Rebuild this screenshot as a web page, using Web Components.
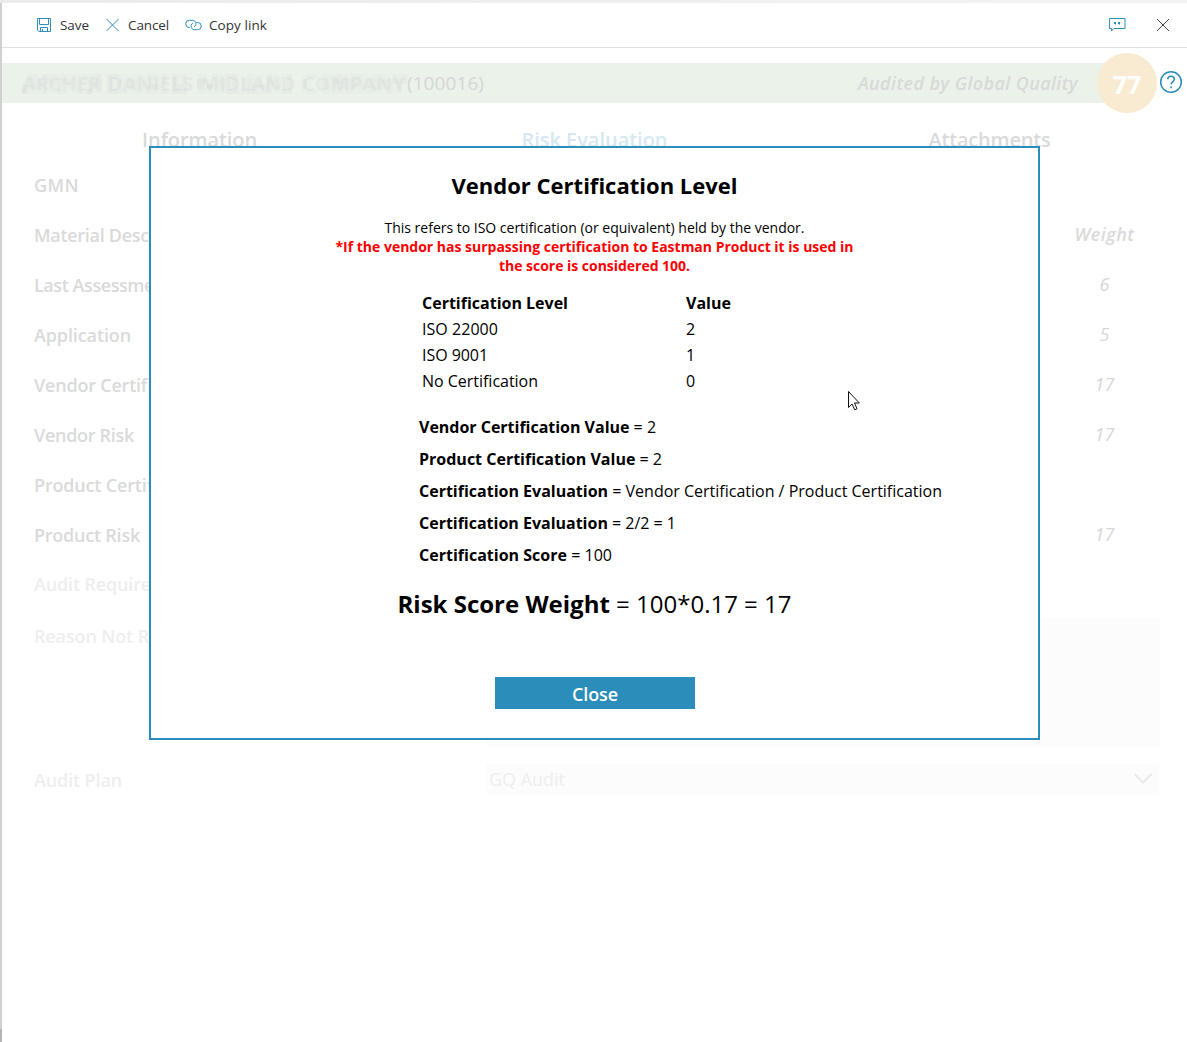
<!DOCTYPE html>
<html lang="en">
<head>
<meta charset="utf-8">
<title>Vendor Certification Level</title>
<style>
html, body { margin: 0; height: 100%; }
body { font-family: "Open Sans", "Noto Sans", sans-serif; background: #fff; overflow: hidden; }
</style>
</head>
<body>
<risk-app></risk-app>
<script>
const define = (name, html, after) => {
  const tpl = document.createElement('template');
  tpl.innerHTML = html;
  customElements.define(name, class extends HTMLElement {
    connectedCallback() {
      if (this.shadowRoot) return;
      this.attachShadow({ mode: 'open' }).appendChild(tpl.content.cloneNode(true));
      if (after) after(this);
    }
  });
};

/* A single line of text tracked to a given measure (attribute w). */
define('fit-text', `<style>:host{display:inline-block;white-space:pre;flex:none}</style><slot></slot>`, el => {
  const w = parseFloat(el.getAttribute('w'));
  if (!w) return;
  const n = el.textContent.length;
  const cur = el.getBoundingClientRect().width;
  if (cur) el.style.letterSpacing = ((w - cur) / n) + 'px';
  el.style.width = w + 'px';
});

define('tool-action', `<style>
:host{display:flex;align-items:center;font-size:13.5px;line-height:20px;color:#333;height:20px}
::slotted(svg){display:block;flex:none}
</style><slot name="icon"></slot><slot></slot>`);

define('tool-bar', `<style>
:host{display:flex;align-items:center;height:44px;border-bottom:1px solid #e1e1e1;box-sizing:content-box;background:#fff}
.l{display:flex;gap:17px;padding-left:34px;flex:1}
.l tool-action:last-child{margin-left:-1px}
svg{fill:none;stroke:#2a8dba;stroke-width:1}
.r{display:flex;align-items:center;gap:31px;padding-right:18px}
</style>
<div class="l">
<tool-action><svg slot="icon" width="24" height="16" viewBox="0 0 24 16"><path d="M1.500 1.500h13v13H3L1.500 13zM3.500 1.500v6h9v-6M4.500 14.500v-4h7v4M6.500 14v-2"/></svg><fit-text w="29">Save</fit-text></tool-action>
<tool-action><svg slot="icon" width="22" height="16" viewBox="0 0 22 16"><path d="M.5 2l12 12M12.500 2l-12 12"/></svg><fit-text w="41">Cancel</fit-text></tool-action>
<tool-action><svg slot="icon" width="24" height="16" viewBox="0 0 24 16"><path d="M5 10.500H4.300A3.600 3.600 0 0 1 4.300 3.300H7.500A3.500 3.500 0 0 1 9.800 9.400L9 10M11.500 5.500h1.200A3.600 3.600 0 0 1 12.700 12.700H9.500A3.500 3.500 0 0 1 7.200 6.600L8 6"/></svg><fit-text w="58">Copy link</fit-text></tool-action>
</div>
<div class="r">
<svg width="17" height="16" viewBox="0 0 17 16"><path d="M.5 1.500h15.500v10H5L2.500 14v-2.500h-2z"/><path stroke="none" fill="#2a8dba" d="M5 5h2v2L6 8V7H5zM9 5h2v2l-1 1V7H9z"/></svg>
<svg width="12" height="12" viewBox="0 0 12 12" style="stroke:#444"><path d="M0 0l12 12M12 0L0 12"/></svg>
</div>`);

/* Name masked with a 5px mosaic. */
define('masked-name', `<style>
:host{display:grid;width:385px;height:20px;flex:none;align-items:center;justify-items:start}
:host>*{grid-area:1/1}
.n{display:flex;justify-content:space-between;width:383px;font-weight:700;font-size:20px;line-height:20px;color:#dde2dd}
svg{display:block}
</style><div class="n"><fit-text w="79">ARCHER</fit-text> <fit-text w="86">DANIELS</fit-text> <fit-text w="95">MIDLAND</fit-text> <fit-text w="103">COMPANY</fit-text></div><svg width="385" height="20" shape-rendering="crispEdges"></svg>`, el => {
  const svg = el.shadowRoot.querySelector('svg');
  const rows = [
    '02203221212122230332111212213031300210221331021113211303122012232122102210212',
    '13333323332223330313133222213031201432133130231203311303310131343332233232333',
    '33333213122212330312133223421033310414223131232333221303310132233333323332130',
    '42113113201314120332211212213133300211112332233123113303122012221212122112120'
  ];
  const tones = ['#ebf2ea', '#e8eee8', '#e5eae5', '#e2e6e2', '#dcdfdc'];
  let out = '';
  rows.forEach((r, y) => {
    for (let x = 0; x < 77; x++)
      out += `<rect x="${x * 5}" y="${y * 5}" width="5" height="5" fill="${tones[[16, 34, 55].includes(x) ? 0 : +r[x]]}" opacity=".6"/>`;
  });
  svg.innerHTML = out;
});

define('score-banner', `<style>
:host{display:flex;align-items:center;height:60px;background:linear-gradient(#ebf2ea,#ebf2ea) 0 10px/1125px 40px no-repeat;padding-left:20px;color:#d6d6d6;font-size:18px}
masked-name{margin-top:2px}
.id{margin-right:auto;font-size:19px}
.a{font-style:italic;font-weight:600;margin-right:19px;color:#d9d9d9}
.c{width:60px;height:60px;border-radius:50%;background:#f9ebd1;color:#fff;font:700 25px/62px "Open Sans",sans-serif;text-align:center;margin-right:2px}
.h{margin:-3px 4px 0 0}
</style>
<masked-name></masked-name><fit-text class="id" w="77">(100016)</fit-text>
<fit-text class="a" w="220">Audited by Global Quality</fit-text>
<div class="c">77</div>
<svg class="h" width="24" height="24" viewBox="0 0 24 24" fill="none" stroke="#2a8dba"><circle cx="12" cy="12" r="10.300" stroke-width="1.500"/><path stroke-width="1.500" d="M8.800 9.200c0-4 6.500-4 6.500 0 0 2.300-3.200 2.500-3.200 5.300M12.100 16.300v2"/></svg>`);

define('tab-strip', `<style>
:host{display:flex;height:30px;align-items:center;font-size:20px;line-height:28px;font-weight:600;color:#dadada}
:host>*{flex:1;text-align:center}
.s{color:#d6e8f2}
</style>
<div><fit-text w="115">Information</fit-text></div><div class="s"><fit-text w="146">Risk Evaluation</fit-text></div><div><fit-text w="122">Attachments</fit-text></div>`);

define('field-row', `<style>
:host{display:flex;align-items:center;height:50px;padding:0 27px 0 32px;font-size:18px;font-weight:600;color:#dadada;line-height:24px}
:host([dim]){color:#eee}
::slotted([slot=v]){margin-left:auto;width:111px;text-align:center;font-style:italic;font-weight:400;color:#d6d6d6;padding-bottom:2px}
</style><slot></slot><slot name="v"></slot>`);

define('risk-form', `<style>
:host{display:block}
.w fit-text{font-weight:600;color:#dadada}
.area{height:129px;width:674px;background:#fcfcfc}
.reason{display:flex;justify-content:space-between;padding:0 27px 0 32px;margin-top:10px;font-size:18px;font-weight:600;color:#eee}
.reason fit-text{line-height:24px;padding-top:6px}
.plan{display:flex;justify-content:space-between;align-items:center;padding:0 28px 0 32px;margin-top:17px;height:31px;font-size:18px;font-weight:600;color:#eee}
.sel{box-sizing:border-box;display:flex;justify-content:space-between;align-items:center;width:673px;height:31px;background:#fcfcfc;padding:0 6px 2px 3px;font-weight:400}
field-row.b{height:48px}
</style>
<field-row><fit-text w="45">GMN</fit-text></field-row>
<field-row><fit-text w="115">Material Desc</fit-text><span slot="v" class="w"><fit-text w="60">Weight</fit-text></span></field-row>
<field-row><fit-text w="120">Last Assessme</fit-text><span slot="v">6</span></field-row>
<field-row><fit-text w="97">Application</fit-text><span slot="v">5</span></field-row>
<field-row><fit-text w="118">Vendor Certifi</fit-text><span slot="v">17</span></field-row>
<field-row><fit-text w="100">Vendor Risk</fit-text><span slot="v">17</span></field-row>
<field-row><fit-text w="119">Product Certif</fit-text></field-row>
<field-row><fit-text w="106">Product Risk</fit-text><span slot="v">17</span></field-row>
<field-row dim class="b"><fit-text w="117">Audit Require</fit-text></field-row>
<div class="reason"><fit-text w="115">Reason Not R</fit-text><div class="area"></div></div>
<div class="plan"><fit-text w="88">Audit Plan</fit-text><div class="sel"><fit-text w="76">GQ Audit</fit-text><svg width="20" height="14" viewBox="0 0 20 14" fill="none" stroke="#eaeaea" stroke-width="2.200"><path d="M1.500 2l8.500 8.500L18.500 2"/></svg></div></div>`);

define('level-table', `<style>
:host{display:grid;grid-template-columns:264px auto;grid-auto-rows:26px;font-size:16px;line-height:26px}
</style><slot></slot>`);

define('cert-dialog', `<style>
:host{display:flex;flex-direction:column;align-items:center;box-sizing:border-box;width:891px;height:594px;border:2px solid #2a8dba;background:#fff;color:#000}
.t{font-size:22px;font-weight:700;line-height:30px;margin-top:22px}
.p{display:flex;flex-direction:column;align-items:center;font-size:14px;line-height:19px;margin-top:18px}
.red{color:#f00;font-weight:700}
level-table{align-self:flex-start;margin:15px 0 0 271px}
.f{align-self:flex-start;margin:17px 0 0 268px;display:flex;flex-direction:column;align-items:flex-start;font-size:16px;line-height:32px}
.sum{font-size:24px;line-height:34px;margin-top:16px}
button{display:flex;justify-content:center;align-items:center;width:200px;height:32px;margin:56px 0 0 1px;padding:2px 0 0;border:0;background:#2a8dba;color:#fff;font:600 18px/24px "Open Sans",sans-serif}
</style>
<fit-text class="t" w="286">Vendor Certification Level</fit-text>
<div class="p"><fit-text w="420">This refers to ISO certification (or equivalent) held by the vendor.</fit-text>
<fit-text class="red" w="518">*If the vendor has surpassing certification to Eastman Product it is used in</fit-text>
<fit-text class="red" w="191">the score is considered 100.</fit-text></div>
<level-table><b><fit-text w="146">Certification Level</fit-text></b><b><fit-text w="45">Value</fit-text></b>
<span><fit-text w="76">ISO 22000</fit-text></span><span>2</span><span><fit-text w="66">ISO 9001</fit-text></span><span>1</span><span><fit-text w="116">No Certification</fit-text></span><span>0</span></level-table>
<div class="f"><fit-text w="237"><b>Vendor Certification Value</b> = 2</fit-text>
<fit-text w="243"><b>Product Certification Value</b> = 2</fit-text>
<fit-text w="523"><b>Certification Evaluation</b> = Vendor Certification / Product Certification</fit-text>
<fit-text w="257"><b>Certification Evaluation</b> = 2/2 = 1</fit-text>
<fit-text w="193"><b>Certification Score</b> = 100</fit-text></div>
<fit-text class="sum" w="394"><b>Risk Score Weight</b> = 100*0.17 = 17</fit-text>
<button><fit-text w="46">Close</fit-text></button>`);

define('risk-app', `<style>
:host{display:block;box-sizing:border-box;width:1187px;height:1042px;padding:3px 0 0 2px;position:relative;overflow:hidden;background:linear-gradient(#b4b4b4,#b4b4b4) 0 1029px/2px 13px no-repeat,linear-gradient(90deg,#ebebeb,#f3f3f3) 0 0/100% 3px no-repeat,#d0d0d0}
main{height:1039px;background:#fff}
score-banner{margin-top:5px}
tab-strip{margin:12px 0 0}
risk-form{margin-top:5px}
cert-dialog{position:absolute;left:149px;top:146px}
.cur{position:absolute;left:847px;top:390px}
</style>
<main><tool-bar></tool-bar><score-banner></score-banner><tab-strip></tab-strip><risk-form></risk-form></main>
<cert-dialog></cert-dialog>
<svg class="cur" width="14" height="22" viewBox="0 0 14 22"><path d="M1.500 1.500v16l3.600-3.500 2.600 5.800 2.300-1-2.500-5.800h4.800z" fill="#fff" stroke="#111"/></svg>`);
</script>
</body>
</html>
